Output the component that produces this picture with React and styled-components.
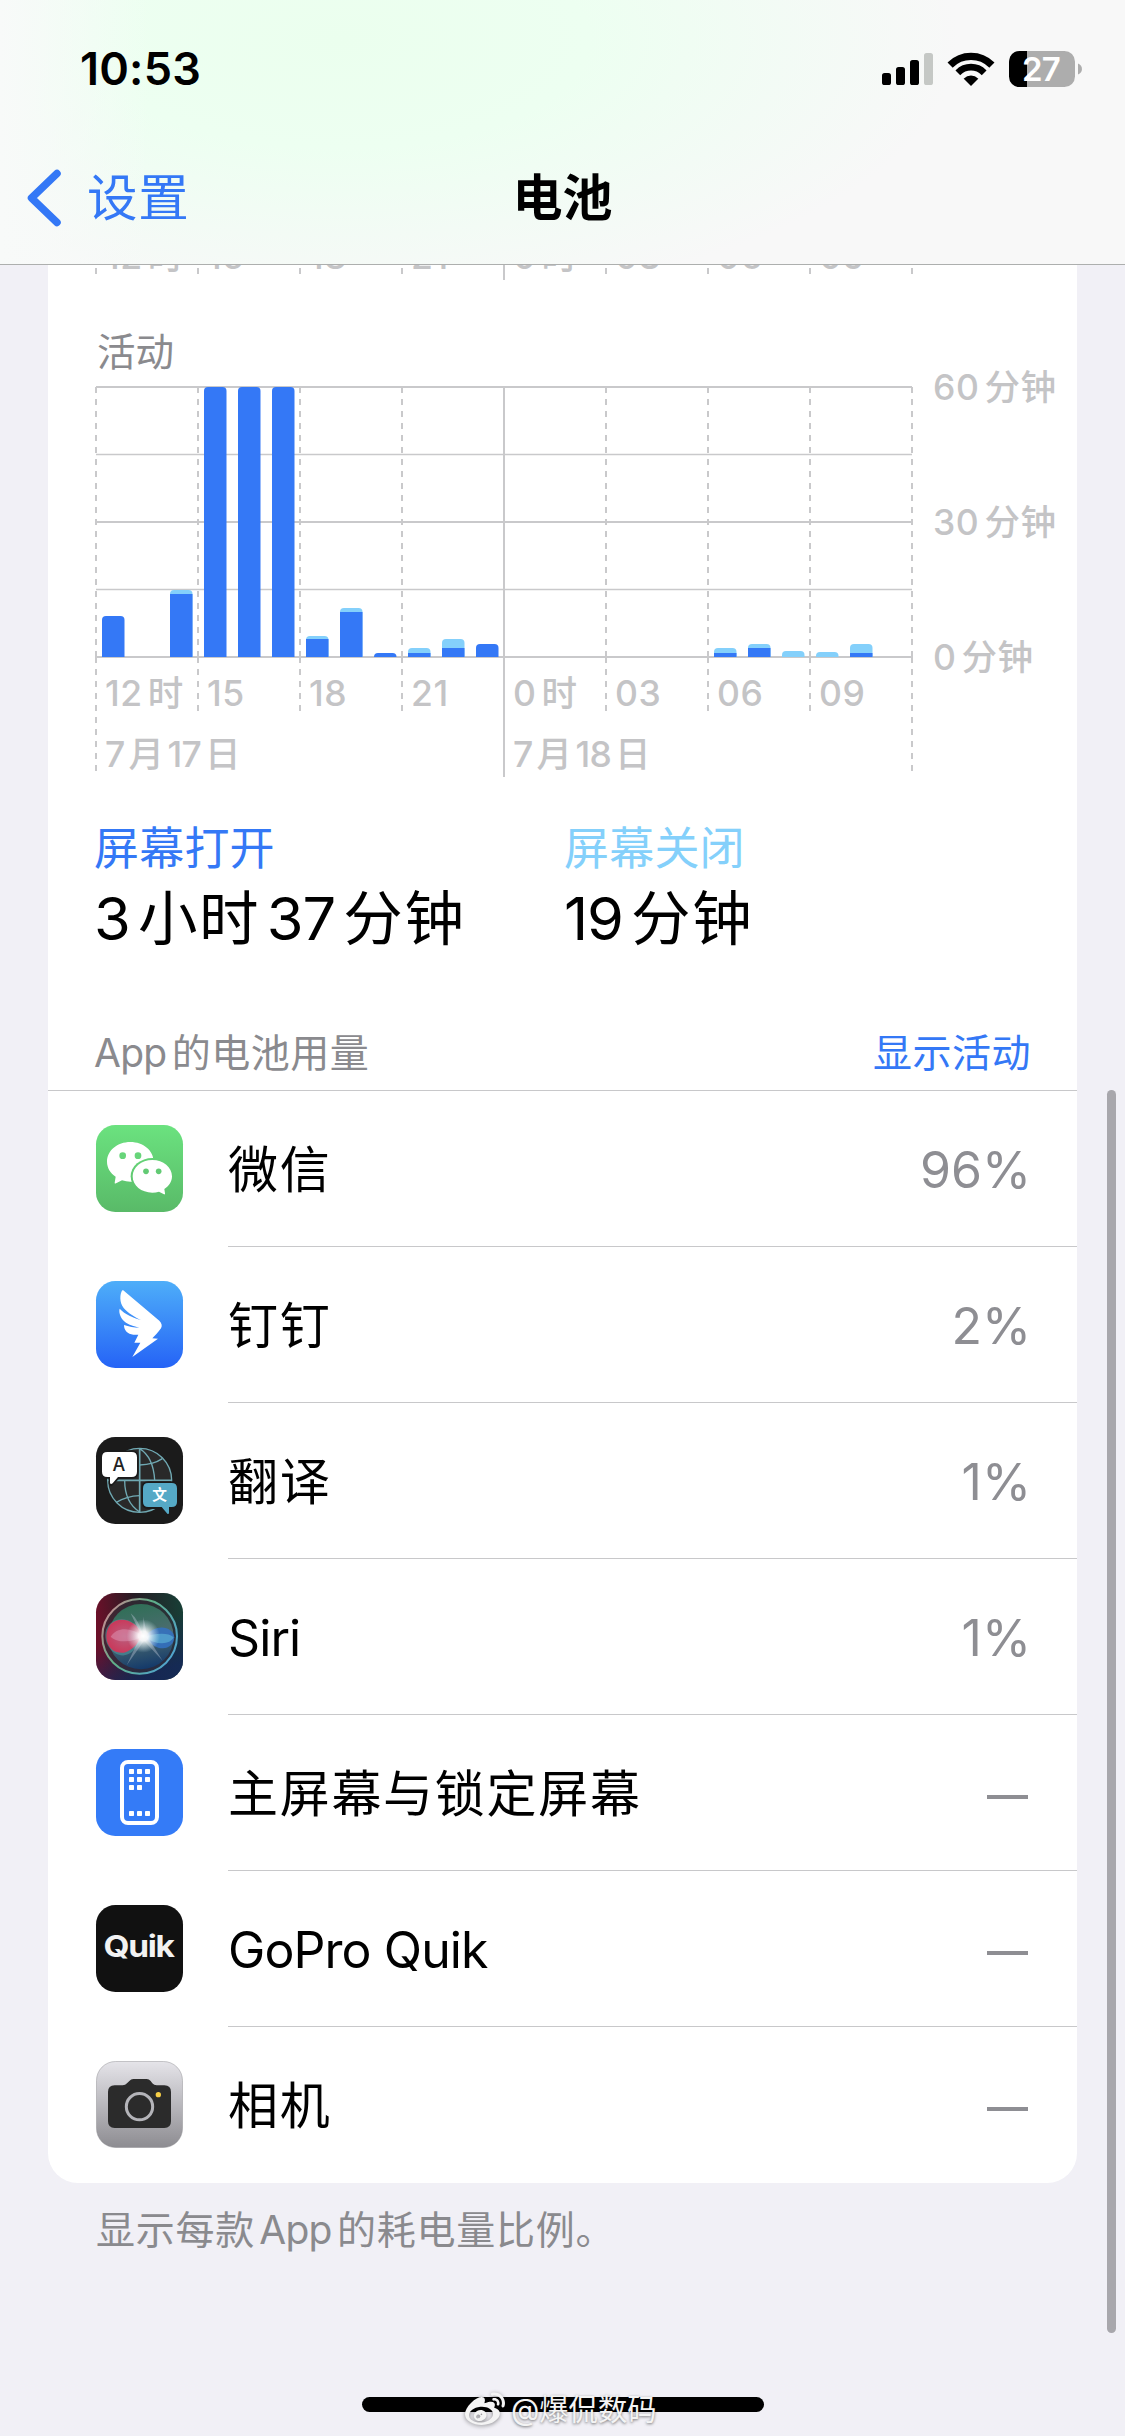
import { Fragment } from 'react';
import styled, { createGlobalStyle } from 'styled-components';
import { FaWeibo } from 'react-icons/fa';

const GlobalStyle = createGlobalStyle`
  * {
    box-sizing: border-box;
  }

  body {
    margin: 0;
    background: #f1f0f6;
    font-family: Inter, 'Noto Sans CJK SC', sans-serif;
    color: #000;
  }

  svg {
    display: block;
    flex-shrink: 0;
    overflow: visible;
  }
`;

const Screen = styled.div`
  position: relative;
  display: flex;
  flex-direction: column;
  width: 1125px;
  height: 2436px;
  overflow: hidden;
  background: #f1f0f6;
`;

const Header = styled.header`
  height: 265px;
  flex-shrink: 0;
  border-bottom: 1px solid #adafae;
  background:
    linear-gradient(90deg, #f8faf9 0, rgba(248, 250, 249, 0) 150px),
    radial-gradient(
      ellipse 620px 270px at 340px 40px,
      #ebffee 0%,
      #edfff1 40%,
      rgba(241, 252, 244, 0.8) 70%,
      rgba(248, 248, 248, 0) 100%
    ),
    #f8f8f8;
`;

const StatusBar = styled.div`
  display: flex;
  align-items: center;
  justify-content: space-between;
  height: 138px;
  padding: 0 43px 0 80px;
`;

const Clock = styled.span`
  font-size: 45px;
  font-weight: 600;
  line-height: 54px;
  letter-spacing: 0.2px;
`;

const StatusIcons = styled.div`
  display: flex;
  align-items: center;
  gap: 15px;
`;

const NavBar = styled.nav`
  display: grid;
  grid-template-columns: 1fr auto 1fr;
  align-items: center;
  height: 120px;
  padding: 0 26px;
`;

const BackLink = styled.a`
  display: flex;
  align-items: center;
  gap: 25px;
  font-size: 50.5px;
  line-height: 60px;
  letter-spacing: 0.8px;
  color: #3478f6;
`;

const NavTitle = styled.h1`
  margin: 0;
  font-size: 50px;
  font-weight: 600;
  line-height: 60px;
`;

const Card = styled.section`
  width: 1029px;
  margin: 0 48px;
  flex-shrink: 0;
  border-radius: 0 0 30px 30px;
  background: #fff;
`;

/* bottom of the previous chart, scrolled under the header */
const ClippedAxis = styled.div`
  display: flex;
  align-items: flex-end;
  height: 15px;
  overflow: hidden;
`;

const ChartTitle = styled.h2`
  margin: 0;
  padding: 48px 0 0 49px;
  height: 100px;
  font-size: 38.5px;
  font-weight: 400;
  line-height: 48px;
  color: #8a8a8e;
`;

const Stats = styled.div`
  display: grid;
  grid-template-columns: 470px 1fr;
  padding: 38px 46px 0;
  height: 226px;
`;

const StatLabel = styled.p`
  margin: 0;
  font-size: 45px;
  line-height: 62px;
  letter-spacing: 0.2px;
  color: ${(props) => (props.$light ? '#84d0fb' : '#3478f6')};
`;

const StatValue = styled.p`
  margin: 0;
  font-size: 59.5px;
  line-height: 77px;
  letter-spacing: 1.7px;
`;

const ListHeader = styled.div`
  display: flex;
  align-items: center;
  justify-content: space-between;
  height: 85px;
  padding: 9px 46px 0;
  border-bottom: 1px solid #c8c8ca;
  font-size: 39px;
  line-height: 48px;
  letter-spacing: 0.5px;
  color: #8a8a8e;
`;

const ToggleLink = styled.a`
  color: #3478f6;
`;

const AppList = styled.ul`
  margin: 0;
  padding: 0;
  list-style: none;
`;

const AppRow = styled.li`
  display: flex;
  align-items: center;
  gap: 45px;
  height: 156px;
  padding-left: 48px;

  > svg {
    margin-bottom: 1px;
  }
`;

const AppBody = styled.div`
  display: flex;
  flex: 1;
  align-items: center;
  justify-content: space-between;
  align-self: stretch;
  padding: 3px 49px 0 0;
  border-bottom: 1px solid #c8c8ca;
  font-size: 50px;
  line-height: 60px;

  ${AppRow}:last-child & {
    border-bottom-color: transparent;
  }
`;

const AppName = styled.span`
  letter-spacing: ${(props) => (props.$latin ? '-0.9px' : '1.7px')};
`;

const AppShare = styled.span`
  margin-right: -3px;
  color: #8e8e93;
`;

const Dash = styled.span`
  width: 41px;
  height: 4px;
  margin-top: 6px;
  background: #8e8e93;
`;

const Footnote = styled.p`
  margin: 0;
  padding: 22px 0 0 96px;
  font-size: 39px;
  line-height: 50px;
  letter-spacing: 0.75px;
  color: #8a8a8e;
`;

const Latin = styled.span`
  margin-right: ${(props) => (props.$end ? 0 : '0.14em')};
  margin-left: ${(props) => (props.$start ? 0 : '0.11em')};
  letter-spacing: -0.02em;
`;

const ScrollThumb = styled.div`
  position: absolute;
  top: 1090px;
  right: 9px;
  width: 9px;
  height: 1243px;
  border-radius: 5px;
  background: #a8a7ac;
`;

const HomeIndicator = styled.div`
  position: absolute;
  bottom: 24px;
  left: 362px;
  width: 402px;
  height: 15px;
  border-radius: 8px;
  background: #000;
`;

const Watermark = styled.div`
  position: absolute;
  bottom: 6px;
  left: 465px;
  display: flex;
  align-items: center;
  gap: 6px;
  font-size: 29.3px;
  line-height: 40px;
  color: #f4f4f4;
  text-shadow: 0 1px 3px rgba(0, 0, 0, 0.55);
  white-space: nowrap;

  svg {
    filter: drop-shadow(0 1px 2px rgba(0, 0, 0, 0.45));
  }
`;

const splitRuns = (text) => text.match(/[\x20-\x7e]+|[^\x20-\x7e]+/g);

// Adds the small gap between latin and chinese runs
function Mixed({ children }) {
  const runs = splitRuns(children);
  return runs.map((run, i) =>
    /[\x20-\x7e]/.test(run) ? (
      <Latin key={i} $start={i === 0} $end={i === runs.length - 1}>
        {run}
      </Latin>
    ) : (
      <Fragment key={i}>{run}</Fragment>
    )
  );
}

const AxisText = styled.text`
  font-size: 35.5px;
  font-weight: 500;
  letter-spacing: ${(props) => (props.$tight ? '-0.7px' : '0.6px')};
  fill: #c4c4c6;
`;

function AxisLabel({ x, y, tight, children }) {
  return (
    <AxisText x={x} y={y} $tight={tight}>
      {splitRuns(children).map((run, i) => (
        <tspan key={i} dx={i === 0 ? 0 : tight ? 4 : 5}>
          {run}
        </tspan>
      ))}
    </AxisText>
  );
}

const HOUR = 34;
const PLOT_TOP = 7;
const PLOT_HEIGHT = 270;
const PLOT_BOTTOM = PLOT_TOP + PLOT_HEIGHT;
const hourLabels = ['12时', '15', '18', '21', '0时', '03', '06', '09'];
const ticks = [0, 1, 2, 3, 4, 5, 6, 7, 8];

// bar heights: [hour, screen on, screen off]
const activity = [
  [0, 41, 0],
  [2, 63, 4],
  [3, 270, 0],
  [4, 270, 0],
  [5, 270, 0],
  [6, 18, 3],
  [7, 45, 4],
  [8, 4, 0],
  [9, 4, 5],
  [10, 9, 9],
  [11, 13, 0],
  [18, 4, 5],
  [19, 9, 4],
  [20, 0, 6],
  [21, 0, 5],
  [22, 4, 9]
];

function topRounded(x, y, w, h) {
  const r = Math.min(4, h);
  return `M${x} ${y + h}V${y + r}Q${x} ${y} ${x + r} ${y}H${x + w - r}Q${x + w} ${y} ${x + w} ${y + r}V${y + h}Z`;
}

function Bar({ hour, on, off }) {
  const x = 48 + hour * HOUR + 6;
  const total = on + off;
  return (
    <g>
      <path
        d={topRounded(x, PLOT_BOTTOM - total, 22.5, total)}
        fill={off ? '#84d0fb' : '#3478f6'}
      />
      {off > 0 && on > 0 && (
        <rect
          x={x}
          y={PLOT_BOTTOM - on}
          width="22.5"
          height={on}
          fill="#3478f6"
        />
      )}
    </g>
  );
}

function ActivityChart() {
  return (
    <svg width="1029" height="400" viewBox="0 0 1029 400">
      {[0, 1, 2, 3, 4].map((i) => (
        <line
          key={i}
          x1="48"
          x2="864"
          y1={PLOT_TOP + i * 67.5}
          y2={PLOT_TOP + i * 67.5}
          stroke="#c9c9cb"
          strokeWidth={i % 2 ? 1.5 : 2}
        />
      ))}
      {ticks.map((i) => {
        const x = 48 + i * 102;
        const solid = i === 4;
        const tall = i === 0 || i === 8;
        const end = solid ? 397 : tall ? 391 : 331;
        return (
          <path
            key={i}
            d={`M${x} ${PLOT_TOP}V${PLOT_BOTTOM}M${x} ${PLOT_BOTTOM}V${end}`}
            fill="none"
            stroke="#c9c9cb"
            strokeWidth="2"
            strokeDasharray={solid ? 'none' : '6 6'}
          />
        );
      })}
      {activity.map(([hour, on, off]) => (
        <Bar key={hour} hour={hour} on={on} off={off} />
      ))}
      {hourLabels.map((label, i) => (
        <AxisLabel key={label} x={57 + i * 102} y={326}>
          {label}
        </AxisLabel>
      ))}
      <AxisLabel x={57} y={387} tight>
        7月17日
      </AxisLabel>
      <AxisLabel x={465} y={387} tight>
        7月18日
      </AxisLabel>
      <AxisLabel x={885} y={20}>
        60分钟
      </AxisLabel>
      <AxisLabel x={885} y={155}>
        30分钟
      </AxisLabel>
      <AxisLabel x={885} y={290}>
        0分钟
      </AxisLabel>
    </svg>
  );
}

function PreviousAxis() {
  return (
    <svg width="1029" height="50" viewBox="0 0 1029 50">
      {ticks.map((i) => (
        <line
          key={i}
          x1={48 + i * 102}
          x2={48 + i * 102}
          y1={i === 4 ? 0 : 38}
          y2={i === 4 ? 50 : 44}
          stroke="#c9c9cb"
          strokeWidth="2"
        />
      ))}
      {hourLabels.map((label, i) => (
        <AxisLabel key={label} x={57 + i * 102} y={39}>
          {label}
        </AxisLabel>
      ))}
    </svg>
  );
}

function SignalIcon() {
  return (
    <svg width="51" height="36" viewBox="0 0 51 36">
      <rect x="0" y="22" width="9" height="12" rx="2.6" />
      <rect x="14" y="16" width="9" height="18" rx="2.6" />
      <rect x="28" y="9" width="9" height="25" rx="2.6" />
      <rect x="42" y="2" width="9" height="32" rx="2.6" fill="#c5c8c5" />
    </svg>
  );
}

function WifiIcon() {
  return (
    <svg width="46" height="36" viewBox="0 -1.5 46 36">
      <clipPath id="wifi-fan">
        <path d="M23 33.5L-11 -0.5V-4H57V-0.5Z" />
      </clipPath>
      <g clipPath="url(#wifi-fan)" fill="none" stroke="#000">
        <circle cx="23" cy="33" r="29.2" strokeWidth="7.2" />
        <circle cx="23" cy="33" r="18.3" strokeWidth="6.8" />
        <circle cx="23" cy="33" r="10" fill="#000" stroke="none" />
      </g>
    </svg>
  );
}

const BatteryText = styled.text`
  font-size: 33px;
  font-weight: 600;
  fill: #fff;
`;

function BatteryIcon() {
  return (
    <svg width="73" height="36" viewBox="0 0 73 36">
      <clipPath id="battery-shell">
        <rect width="66" height="36" rx="10.5" />
      </clipPath>
      <g clipPath="url(#battery-shell)">
        <rect width="66" height="36" fill="#adadad" />
        <rect width="18" height="36" fill="#000" />
      </g>
      <path d="M69 12.5C74.3 14.5 74.3 21.5 69 23.5Z" fill="#adadad" />
      <BatteryText x="32" y="30" textAnchor="middle" letterSpacing="-0.8">
        27
      </BatteryText>
    </svg>
  );
}

function BackIcon() {
  return (
    <svg width="36" height="60" viewBox="0 0 36 60">
      <path
        d="M31 5.5L5.5 30L31 54.5"
        fill="none"
        stroke="#3478f6"
        strokeWidth="7.5"
        strokeLinecap="round"
        strokeLinejoin="round"
      />
    </svg>
  );
}

function WechatIcon() {
  return (
    <svg width="87" height="87" viewBox="0 0 261 261">
      <defs>
        <linearGradient
          id="wechat-bg"
          gradientUnits="userSpaceOnUse"
          x1="0"
          y1="0"
          x2="0"
          y2="261"
        >
          <stop offset="0" stopColor="#6be27f" />
          <stop offset="1" stopColor="#59ba68" />
        </linearGradient>
      </defs>
      <rect width="261" height="261" rx="58" fill="url(#wechat-bg)" />
      <path
        d="M103 51C64 51 33 77 33 110C33 128 43 144 59 155L56 173Q56 177 60 175L78 166C86 168 95 170 103 170C142 170 173 144 173 110C173 77 142 51 103 51Z"
        fill="#fff"
      />
      <ellipse cx="80" cy="92" rx="10" ry="10" fill="#67d57a" />
      <ellipse cx="126" cy="92" rx="10" ry="10" fill="#67d57a" />
      <ellipse cx="169" cy="154" rx="65" ry="55" fill="url(#wechat-bg)" />
      <path
        d="M169 105C136 105 110 127 110 154C110 182 136 203 169 203C176 203 183 202 189 200L204 208Q208 209 207 205L205 192C219 183 228 170 228 154C228 127 202 105 169 105Z"
        fill="#fff"
      />
      <circle cx="150" cy="139" r="8.5" fill="#62ca74" />
      <circle cx="188" cy="139" r="8.5" fill="#62ca74" />
    </svg>
  );
}

function DingtalkIcon() {
  return (
    <svg width="87" height="87" viewBox="48 513 261 261">
      <defs>
        <linearGradient id="ding-bg" x1="0" y1="0" x2="0" y2="1">
          <stop offset="0" stopColor="#4eaef9" />
          <stop offset="1" stopColor="#2563f6" />
        </linearGradient>
      </defs>
      <rect
        x="48"
        y="513"
        width="261"
        height="261"
        rx="58"
        fill="url(#ding-bg)"
      />
      <path
        d="M127 541C119 552 118 578 131 594C143 609 165 622 183 630C160 624 135 613 119 596C115 608 123 628 138 638C150 646 165 649 178 653C163 653 146 650 132 645C132 662 143 672 160 674C166 675 170 674 175 674L163 698L181 698L157 741L234 686L217 685C224 678 234 668 243 655C247 648 246 640 238 632L135 545Q130 540 127 541Z"
        fill="#fff"
      />
    </svg>
  );
}

const GlyphText = styled.text`
  font-family: 'Noto Sans CJK SC', sans-serif;
  font-weight: 700;
`;

function TranslateIcon() {
  return (
    <svg width="87" height="87" viewBox="48 51 261 261">
      <rect x="48" y="51" width="261" height="261" rx="58" fill="#1b1b1b" />
      <g stroke="#70a9b3" strokeWidth="4" fill="none">
        <circle cx="179" cy="181" r="96" fill="#292929" />
        <path d="M179 85V277M83 181H275" strokeWidth="5" />
        <path d="M179 86C211 106 222 143 224 181" />
        <path d="M179 135C205 134 228 129 247 116" />
        <path d="M179 227C153 228 130 234 109 247" />
        <path d="M179 276C147 256 134 219 134 181" />
      </g>
      <path
        d="M82 91H155Q176 91 176 112V155Q176 176 155 176H117L96 198Q88 200 86 192V176H82Q61 176 61 155V112Q61 91 82 91Z"
        fill="#1b1b1b"
      />
      <path
        d="M82 96H155Q171 96 171 112V155Q171 171 155 171H114L98 190Q92 195 90 189V171H82Q66 171 66 155V112Q66 96 82 96Z"
        fill="#fff"
      />
      <path
        d="M204 184H276Q296 184 296 205V247Q296 267 276 267H272V282L258 284L243 267H204Q184 267 184 247V205Q184 184 204 184Z"
        fill="#1b1b1b"
      />
      <path
        d="M205 189H275Q291 189 291 205V246Q291 261 275 261H267V279Q266 284 262 281L245 261H205Q189 261 189 246V205Q189 189 205 189Z"
        fill="#55a9c6"
      />
      <text
        x="117"
        y="153"
        fontSize="54"
        fontWeight="500"
        textAnchor="middle"
        fill="#222"
      >
        A
      </text>
      <GlyphText x="239" y="241" fontSize="44" textAnchor="middle" fill="#fff">
        文
      </GlyphText>
    </svg>
  );
}

function SiriIcon() {
  return (
    <svg width="87" height="87" viewBox="48 519 261 261">
      <defs>
        <linearGradient id="siri-bg" x1="0" y1="0.2" x2="1" y2="0.1">
          <stop offset="0" stopColor="#6b1029" />
          <stop offset="0.45" stopColor="#261c24" />
          <stop offset="1" stopColor="#173f36" />
        </linearGradient>
        <linearGradient id="siri-floor" x1="0.1" y1="0" x2="0.5" y2="1">
          <stop offset="0.5" stopColor="#14285a" stopOpacity="0" />
          <stop offset="1" stopColor="#14285a" stopOpacity="0.85" />
        </linearGradient>
        <linearGradient id="siri-ring" x1="0" y1="0.2" x2="1" y2="0.8">
          <stop offset="0" stopColor="#c98a92" />
          <stop offset="0.4" stopColor="#5fae86" />
          <stop offset="1" stopColor="#4fa3d4" />
        </linearGradient>
        <linearGradient id="siri-orb" x1="0.4" y1="0" x2="0.6" y2="1">
          <stop offset="0" stopColor="#2f6f56" />
          <stop offset="0.5" stopColor="#4c6c70" />
          <stop offset="1" stopColor="#12386a" />
        </linearGradient>
        <radialGradient id="siri-red" cx="0.5" cy="0.5" r="0.5">
          <stop offset="0" stopColor="#b9607f" />
          <stop offset="1" stopColor="#c93a5c" />
        </radialGradient>
        <radialGradient id="siri-glow">
          <stop offset="0" stopColor="#fff" />
          <stop offset="0.3" stopColor="#fff" stopOpacity="0.9" />
          <stop offset="1" stopColor="#cfeaf0" stopOpacity="0" />
        </radialGradient>
      </defs>
      <rect
        x="48"
        y="519"
        width="261"
        height="261"
        rx="58"
        fill="url(#siri-bg)"
      />
      <rect
        x="48"
        y="519"
        width="261"
        height="261"
        rx="58"
        fill="url(#siri-floor)"
      />
      <circle cx="179" cy="649" r="113" fill="#33303a" fillOpacity="0.6" />
      <circle cx="183" cy="650" r="98" fill="url(#siri-orb)" />
      <circle
        cx="179"
        cy="649"
        r="112"
        fill="none"
        stroke="url(#siri-ring)"
        strokeWidth="6"
      />
      <path
        d="M190 646C165 590 98 580 78 630C64 680 120 730 158 694C173 680 183 662 190 646Z"
        fill="#4f98a0"
        fillOpacity="0.6"
      />
      <path
        d="M190 646C172 604 122 584 92 612C64 648 84 704 132 698C160 692 178 664 190 646Z"
        fill="url(#siri-red)"
      />
      <path
        d="M92 650C110 622 150 620 190 648C160 668 110 670 92 650Z"
        fill="#dc8fae"
        fillOpacity="0.55"
      />
      <path
        d="M195 650C225 608 280 618 283 652C280 694 225 698 195 650Z"
        fill="#3472c4"
        fillOpacity="0.85"
      />
      <path
        d="M195 650C225 640 265 636 281 652C270 676 225 676 195 650Z"
        fill="#65c0dc"
        fillOpacity="0.55"
      />
      <path
        d="M183 645L152 580Q174 596 190 648L190 590L202 650L248 722L192 662L140 736Z"
        fill="#bfc7d6"
        fillOpacity="0.4"
      />
      <circle cx="190" cy="648" r="50" fill="url(#siri-glow)" />
    </svg>
  );
}

function HomeScreenIcon() {
  const dots = [
    [147, 117],
    [171, 117],
    [195, 117],
    [147, 141],
    [171, 141],
    [195, 141],
    [147, 165],
    [171, 165],
    [147, 243],
    [171, 243],
    [195, 243]
  ];
  return (
    <svg width="87" height="87" viewBox="48 57 261 261">
      <rect x="48" y="57" width="261" height="261" rx="58" fill="#347bf7" />
      <rect
        x="126"
        y="96"
        width="105"
        height="183"
        rx="18"
        fill="none"
        stroke="#fff"
        strokeWidth="12"
      />
      {dots.map(([x, y]) => (
        <rect
          key={`${x}-${y}`}
          x={x}
          y={y}
          width="15"
          height="15"
          rx="2"
          fill="#fff"
        />
      ))}
    </svg>
  );
}

function QuikIcon() {
  return (
    <svg width="87" height="87" viewBox="0 0 87 87">
      <rect width="87" height="87" rx="19.5" fill="#111" />
      <text
        x="7.5"
        y="51.5"
        fontSize="30"
        fontWeight="700"
        textLength="70"
        lengthAdjust="spacingAndGlyphs"
        letterSpacing="-1.2"
        fill="#f2f2f2"
      >
        Quik
      </text>
    </svg>
  );
}

function CameraIcon() {
  return (
    <svg width="87" height="87" viewBox="48 993 261 261">
      <defs>
        <linearGradient id="camera-bg" x1="0" y1="0" x2="0" y2="1">
          <stop offset="0" stopColor="#e5e4e9" />
          <stop offset="1" stopColor="#8d8c91" />
        </linearGradient>
      </defs>
      <rect
        x="49.5"
        y="994.5"
        width="258"
        height="258"
        rx="57"
        fill="url(#camera-bg)"
        stroke="#8a8a8e"
        strokeOpacity="0.45"
        strokeWidth="3"
      />
      <path
        d="M104 1066H128Q136 1066 141 1060L148 1053Q153 1047 160 1047H200Q207 1047 212 1053L217 1060Q222 1066 230 1066H253Q273 1066 273 1086V1174Q273 1194 253 1194H104Q84 1194 84 1174V1086Q84 1066 104 1066Z"
        fill="#2b2b2b"
      />
      <circle
        cx="178.5"
        cy="1130"
        r="39.5"
        fill="#2b2b2b"
        stroke="#b4b4b9"
        strokeWidth="9"
      />
      <circle cx="235" cy="1094" r="8" fill="#f8cf46" />
    </svg>
  );
}

const apps = [
  { name: '微信', icon: WechatIcon, share: '96%' },
  { name: '钉钉', icon: DingtalkIcon, share: '2%' },
  { name: '翻译', icon: TranslateIcon, share: '1%' },
  { name: 'Siri', icon: SiriIcon, share: '1%', latin: true },
  { name: '主屏幕与锁定屏幕', icon: HomeScreenIcon },
  { name: 'GoPro Quik', icon: QuikIcon, latin: true },
  { name: '相机', icon: CameraIcon }
];

function App() {
  return (
    <>
      <GlobalStyle />
      <Screen>
        <Header>
          <StatusBar>
            <Clock>10:53</Clock>
            <StatusIcons>
              <SignalIcon />
              <WifiIcon />
              <BatteryIcon />
            </StatusIcons>
          </StatusBar>
          <NavBar>
            <BackLink>
              <BackIcon />
              设置
            </BackLink>
            <NavTitle>电池</NavTitle>
          </NavBar>
        </Header>

        <Card>
          <ClippedAxis>
            <PreviousAxis />
          </ClippedAxis>
          <ChartTitle>活动</ChartTitle>
          <ActivityChart />
          <Stats>
            <div>
              <StatLabel>屏幕打开</StatLabel>
              <StatValue>
                <Mixed>3小时37分钟</Mixed>
              </StatValue>
            </div>
            <div>
              <StatLabel $light>屏幕关闭</StatLabel>
              <StatValue>
                <Mixed>19分钟</Mixed>
              </StatValue>
            </div>
          </Stats>
          <ListHeader>
            <span>
              <Mixed>App的电池用量</Mixed>
            </span>
            <ToggleLink>显示活动</ToggleLink>
          </ListHeader>
          <AppList>
            {apps.map(({ name, icon: Icon, share, latin }) => (
              <AppRow key={name}>
                <Icon />
                <AppBody>
                  <AppName $latin={latin}>{name}</AppName>
                  {share ? <AppShare>{share}</AppShare> : <Dash />}
                </AppBody>
              </AppRow>
            ))}
          </AppList>
        </Card>
        <Footnote>
          <Mixed>显示每款App的耗电量比例。</Mixed>
        </Footnote>

        <ScrollThumb />
        <HomeIndicator />
        <Watermark>
          <FaWeibo size={40} />
          @爆侃数码
        </Watermark>
      </Screen>
    </>
  );
}

export default App;
